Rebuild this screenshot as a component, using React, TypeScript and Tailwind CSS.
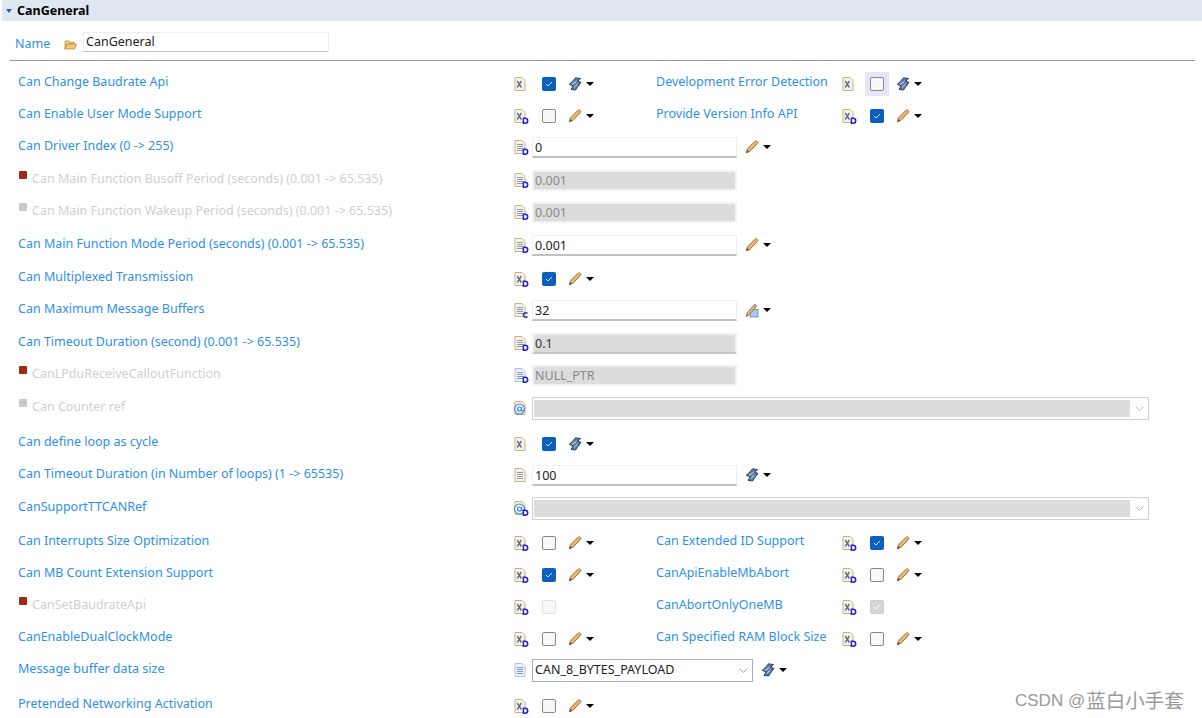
import type { ReactNode } from 'react';

const font = { fontFamily: '"Noto Sans", "Noto Sans CJK SC", sans-serif' };

const DocIcon = ({ glyph, badge, muted }: { glyph: string; badge?: string; muted?: boolean }) => (
    <svg width="15" height="15" viewBox="0 0 15 15" className="shrink-0">
        <path d="M1 .5h7L11 3.5v10H1z" fill={muted ? '#eef1fa' : '#f9f4e2'} stroke={muted ? '#b4bedc' : '#c4b283'} strokeWidth="1" />
        {glyph === 'x' && <path d="M3.2 4l4.2 6.5M7.4 4L3.2 10.5" stroke="#5a6c9e" strokeWidth="1.4" fill="none" />}
        {glyph === 'lines' && <path d="M3 4.5h6M3 6.5h6M3 8.5h6M3 10.5h6" stroke="#8199c6" strokeWidth="1" fill="none" />}
        {glyph === 'at' && (
            <g fill="none" stroke="#4f86c6" strokeWidth="1.1">
                <circle cx="5.5" cy="8" r="5" fill="#e3effa" />
                <circle cx="5.5" cy="8" r="2" />
                <path d="M7.5 6v3c0 1 1.8 1 2.4 0" />
            </g>
        )}
        {badge === 'd' && <path d="M9.4 9.2v5h1.5c2 0 2.8-1.1 2.8-2.5s-.8-2.5-2.8-2.5z" fill="#fff" stroke="#1f1fd6" strokeWidth="1.5" />}
        {badge === 'c' && <path d="M13.6 10.2c-2.2-1-4.2 0-4.2 1.8s2 2.8 4.2 1.8" fill="none" stroke="#2b3f9c" strokeWidth="1.6" />}
    </svg>
);

const Pen = () => (
    <svg width="14" height="14" viewBox="0 0 14 14" className="shrink-0">
        <path d="M2.4 9L9.8 1.4c.7-.7 1.7-.7 2.4 0s.7 1.6 0 2.3L4.8 11.4 1.3 12.8z" fill="#efb36e" stroke="#96682f" strokeWidth="0.9" />
        <path d="M1.3 12.8l.8-2.9 2.2 2z" fill="#5a5a5a" />
    </svg>
);

const Wrench = () => (
    <svg width="14" height="14" viewBox="0 0 14 14" className="shrink-0">
        <path d="M7.5.8l5 .8-2.8 2.6 3.3 1.2-3.6 4.8L7.6 13 3 12.4l2.2-3.6L1.2 7.4 5.8 3z" fill="#5d7da6" stroke="#2c4266" strokeWidth="1" />
        <path d="M3.8 7.6L8.6 4.2M6 10.4l3.4-3.2" stroke="#dde7f2" strokeWidth="1" />
    </svg>
);

const PenDoc = () => (
    <svg width="14" height="15" viewBox="0 0 14 15" className="shrink-0">
        <rect x="5" y="6.5" width="8" height="7.5" fill="#a9cbe8" stroke="#5f85aa" strokeWidth="0.8" />
        <path d="M1.2 13.5L2 10 9 2c.6-.7 1.5-.6 2 0s.4 1.3 0 1.9L4 12z" fill="#e2b77f" stroke="#77603f" strokeWidth="0.8" />
    </svg>
);

const Menu = ({ tool }: { tool: string }) => (
    <div className="flex items-center gap-[4px]">
        {tool === 'pen' && <Pen />}
        {tool === 'wrench' && <Wrench />}
        {tool === 'pendoc' && <PenDoc />}
        <span className="w-0 h-0 border-x-4 border-x-transparent border-t-4 border-t-black" />
    </div>
);

const Check = ({ state }: { state: string }) => {
    if (state === 'on') {
        return (
            <span className="w-[14px] h-[14px] rounded-[2px] bg-[#0a5fc0] flex items-center justify-center shrink-0">
                <svg width="8" height="6" viewBox="0 0 8 6"><path d="M1 3l2 2 4-4" stroke="#cfe2f7" strokeWidth="1" fill="none" /></svg>
            </span>
        );
    }
    if (state === 'disabled') return <span className="w-[14px] h-[14px] rounded-[2px] bg-[#f7f7f7] border border-[#e3e3e3] shrink-0" />;
    if (state === 'disabledOn') {
        return (
            <span className="w-[14px] h-[14px] rounded-[2px] bg-[#d6d6d6] border border-[#cfcfcf] flex items-center justify-center shrink-0">
                <svg width="8" height="6" viewBox="0 0 8 6"><path d="M1 3l2 2 4-4" stroke="#fff" strokeWidth="1" fill="none" /></svg>
            </span>
        );
    }
    return <span className="w-[14px] h-[14px] rounded-[2px] bg-[#f8f8f8] border-[1.5px] border-[#8a8a8a] shrink-0" />;
};

const Label = ({ text, muted, bullet }: { text: string; muted?: boolean; bullet?: string }) => (
    <div className={`pt-1 h-[24px] leading-[19px] whitespace-nowrap flex ${muted ? 'text-[#cfcfcf]' : 'text-[#2f90e9]'}`}>
        {bullet === 'red' && <span className="w-[8px] h-[8px] mt-[2px] ml-px mr-[5px] bg-[#a32a12] rounded-[1px] shrink-0" />}
        {bullet === 'gray' && <span className="w-[8px] h-[8px] mt-[2px] ml-px mr-[5px] bg-[#c9c9c9] rounded-[1px] shrink-0" />}
        {text}
    </div>
);

const CheckCell = ({ doc, state, tool, highlight }: { doc: ReactNode; state: string; tool?: string; highlight?: boolean }) => (
    <div className="flex items-center h-[24px] mt-1">
        <div className="w-[23px] flex">{doc}</div>
        <div className={`w-[24px] h-[24px] flex items-center justify-center ${highlight ? 'bg-[#e6e4fa]' : ''}`}>
            <Check state={state} />
        </div>
        <div className="ml-[7px]">{tool && <Menu tool={tool} />}</div>
    </div>
);

const TextCell = ({ doc, value, tool, variant }: { doc: ReactNode; value: string; tool?: string; variant?: string }) => (
    <div className="flex items-center h-[22px] mt-1">
        <div className="w-[18px] flex">{doc}</div>
        {variant === 'gray' || variant === 'grayDark' ? (
            <div className={`w-[205px] h-[21px] border-2 border-[#f2f2f2] bg-[#dcdcdc] pl-[1px] leading-[18px] ${variant === 'grayDark' ? 'text-[#333] border-b-[#c4c4c4]' : 'text-[#8a8a8a]'}`}>
                {value}
            </div>
        ) : (
            <div className="w-[205px] h-[21px] bg-white border border-[#f0f0f0] border-b-2 border-b-[#c0c0c0] pl-[2px] leading-[20px] text-[#222]">{value}</div>
        )}
        {tool && <div className="ml-[8px]"><Menu tool={tool} /></div>}
    </div>
);

const ComboCell = ({ doc }: { doc: ReactNode }) => (
    <div className="flex items-center h-[22px] mt-1">
        <div className="w-[18px] flex">{doc}</div>
        <div className="w-[617px] h-[23px] bg-white border border-[#cfcfcf] p-px flex items-center">
            <div className="w-[596px] h-[17px] bg-[#dcdcdc]" />
            <svg width="9" height="5" viewBox="0 0 9 5" className="ml-[5px]"><path d="M.5.5l4 4 4-4" stroke="#bdbdbd" fill="none" /></svg>
        </div>
    </div>
);

const Row = ({ h, left, right }: { h: string; left: ReactNode; right: ReactNode }) => (
    <div className={`flex items-start ${h}`}>
        <div className="w-[496px] shrink-0">{left}</div>
        <div className="flex-1">{right}</div>
    </div>
);

// two checkbox groups on one line, second one starts at x=842
const Pair = ({ first, label, second }: { first: ReactNode; label: string; second: ReactNode }) => (
    <div className="flex items-start">
        <div className="w-[142px] shrink-0">{first}</div>
        <div className="w-[186px] shrink-0"><Label text={label} /></div>
        {second}
    </div>
);

export default function App() {
    return (
        <div className="relative w-[1202px] h-[718px] overflow-hidden bg-white text-[12.5px]" style={font}>
            <div className="ml-[2px] h-[21px] bg-[#dfe7f1] flex items-center">
                <span className="ml-[4px] w-0 h-0 border-x-[3.5px] border-x-transparent border-t-4 border-t-[#1565c0]" />
                <span className="ml-[5px] font-bold text-black leading-[18px]">CanGeneral</span>
            </div>
            <div className="mx-[10px] w-[1185px] h-[40px] border-b border-[#999] flex items-start">
                <span className="ml-[5px] mt-[14px] text-[#2f90e9] leading-[18px] w-[49px]">Name</span>
                <svg width="13" height="11" viewBox="0 0 13 11" className="mt-[18px]">
                    <path d="M1 2h4l1 1.3h4V5H3L1 10z" fill="#f0d58e" stroke="#b48a3c" strokeWidth="0.8" />
                    <path d="M1 10l2-5h9.5l-2 5z" fill="#f6c66d" stroke="#b48a3c" strokeWidth="0.8" />
                </svg>
                <div className="ml-[6px] mt-[11px] w-[246px] h-[20px] bg-white border border-[#efefef] border-b-[#c0c0c0] pl-[2px] leading-[18px] text-[#222]">CanGeneral</div>
            </div>
            <div className="pl-[18px] pt-[7px]">
                <Row h="h-[32px]" left={<Label text="Can Change Baudrate Api" />} right={
                    <Pair first={<CheckCell doc={<DocIcon glyph="x" />} state="on" tool="wrench" />} label="Development Error Detection" second={<CheckCell doc={<DocIcon glyph="x" />} state="off" tool="wrench" highlight />} />
                } />
                <Row h="h-[32px]" left={<Label text="Can Enable User Mode Support" />} right={
                    <Pair first={<CheckCell doc={<DocIcon glyph="x" badge="d" />} state="off" tool="pen" />} label="Provide Version Info API" second={<CheckCell doc={<DocIcon glyph="x" badge="d" />} state="on" tool="pen" />} />
                } />
                <Row h="h-[33px]" left={<Label text="Can Driver Index (0 -> 255)" />} right={<TextCell doc={<DocIcon glyph="lines" badge="d" />} value="0" tool="pen" />} />
                <Row h="h-[32px]" left={<Label muted bullet="red" text="Can Main Function Busoff Period (seconds) (0.001 -> 65.535)" />} right={<TextCell doc={<DocIcon glyph="lines" badge="d" />} value="0.001" variant="gray" />} />
                <Row h="h-[33px]" left={<Label muted bullet="gray" text="Can Main Function Wakeup Period (seconds) (0.001 -> 65.535)" />} right={<TextCell doc={<DocIcon glyph="lines" badge="d" />} value="0.001" variant="gray" />} />
                <Row h="h-[33px]" left={<Label text="Can Main Function Mode Period (seconds) (0.001 -> 65.535)" />} right={<TextCell doc={<DocIcon glyph="lines" badge="d" />} value="0.001" tool="pen" />} />
                <Row h="h-[32px]" left={<Label text="Can Multiplexed Transmission" />} right={<CheckCell doc={<DocIcon glyph="x" badge="d" />} state="on" tool="pen" />} />
                <Row h="h-[33px]" left={<Label text="Can Maximum Message Buffers" />} right={<TextCell doc={<DocIcon glyph="lines" badge="c" />} value="32" tool="pendoc" />} />
                <Row h="h-[32px]" left={<Label text="Can Timeout Duration (second) (0.001 -> 65.535)" />} right={<TextCell doc={<DocIcon glyph="lines" badge="d" />} value="0.1" variant="grayDark" />} />
                <Row h="h-[33px]" left={<Label muted bullet="red" text="CanLPduReceiveCalloutFunction" />} right={<TextCell doc={<DocIcon glyph="lines" badge="d" muted />} value="NULL_PTR" variant="gray" />} />
                <Row h="h-[35px]" left={<Label muted bullet="gray" text="Can Counter ref" />} right={<ComboCell doc={<DocIcon glyph="at" />} />} />
                <Row h="h-[32px]" left={<Label text="Can define loop as cycle" />} right={<CheckCell doc={<DocIcon glyph="x" />} state="on" tool="wrench" />} />
                <Row h="h-[33px]" left={<Label text="Can Timeout Duration (in Number of loops) (1 -> 65535)" />} right={<TextCell doc={<DocIcon glyph="lines" />} value="100" tool="wrench" />} />
                <Row h="h-[34px]" left={<Label text="CanSupportTTCANRef" />} right={<ComboCell doc={<DocIcon glyph="at" badge="d" />} />} />
                <Row h="h-[32px]" left={<Label text="Can Interrupts Size Optimization" />} right={
                    <Pair first={<CheckCell doc={<DocIcon glyph="x" badge="d" />} state="off" tool="pen" />} label="Can Extended ID Support" second={<CheckCell doc={<DocIcon glyph="x" badge="d" />} state="on" tool="pen" />} />
                } />
                <Row h="h-[32px]" left={<Label text="Can MB Count Extension Support" />} right={
                    <Pair first={<CheckCell doc={<DocIcon glyph="x" badge="d" />} state="on" tool="pen" />} label="CanApiEnableMbAbort" second={<CheckCell doc={<DocIcon glyph="x" badge="d" />} state="off" tool="pen" />} />
                } />
                <Row h="h-[32px]" left={<Label muted bullet="red" text="CanSetBaudrateApi" />} right={
                    <Pair first={<CheckCell doc={<DocIcon glyph="x" badge="d" />} state="disabled" />} label="CanAbortOnlyOneMB" second={<CheckCell doc={<DocIcon glyph="x" badge="d" />} state="disabledOn" />} />
                } />
                <Row h="h-[32px]" left={<Label text="CanEnableDualClockMode" />} right={
                    <Pair first={<CheckCell doc={<DocIcon glyph="x" badge="d" />} state="off" tool="pen" />} label="Can Specified RAM Block Size" second={<CheckCell doc={<DocIcon glyph="x" badge="d" />} state="off" tool="pen" />} />
                } />
                <Row h="h-[35px]" left={<Label text="Message buffer data size" />} right={
                    <div className="flex items-center h-[22px] mt-1">
                        <div className="w-[18px] flex"><DocIcon glyph="lines" muted /></div>
                        <div className="w-[221px] h-[23px] bg-white border border-[#adadad] pl-[2px] flex items-center justify-between pr-[4px] text-[#222]">
                            CAN_8_BYTES_PAYLOAD
                            <svg width="9" height="5" viewBox="0 0 9 5"><path d="M.5.5l4 4 4-4" stroke="#a0a0a0" fill="none" /></svg>
                        </div>
                        <div className="ml-[8px]"><Menu tool="wrench" /></div>
                    </div>
                } />
                <Row h="h-[28px]" left={<Label text="Pretended Networking Activation" />} right={<CheckCell doc={<DocIcon glyph="x" badge="d" />} state="off" tool="pen" />} />
            </div>
            <div className="absolute left-[1015px] top-[691px] text-[17px] leading-[20px] text-[#9a9a9a] whitespace-nowrap flex items-center gap-[1px]" style={{ fontFamily: '"Liberation Sans", "Noto Sans CJK SC", sans-serif' }}>
                <span>CSDN @</span><span className="text-[19.5px]">蓝白小手套</span>
            </div>
        </div>
    );
}
